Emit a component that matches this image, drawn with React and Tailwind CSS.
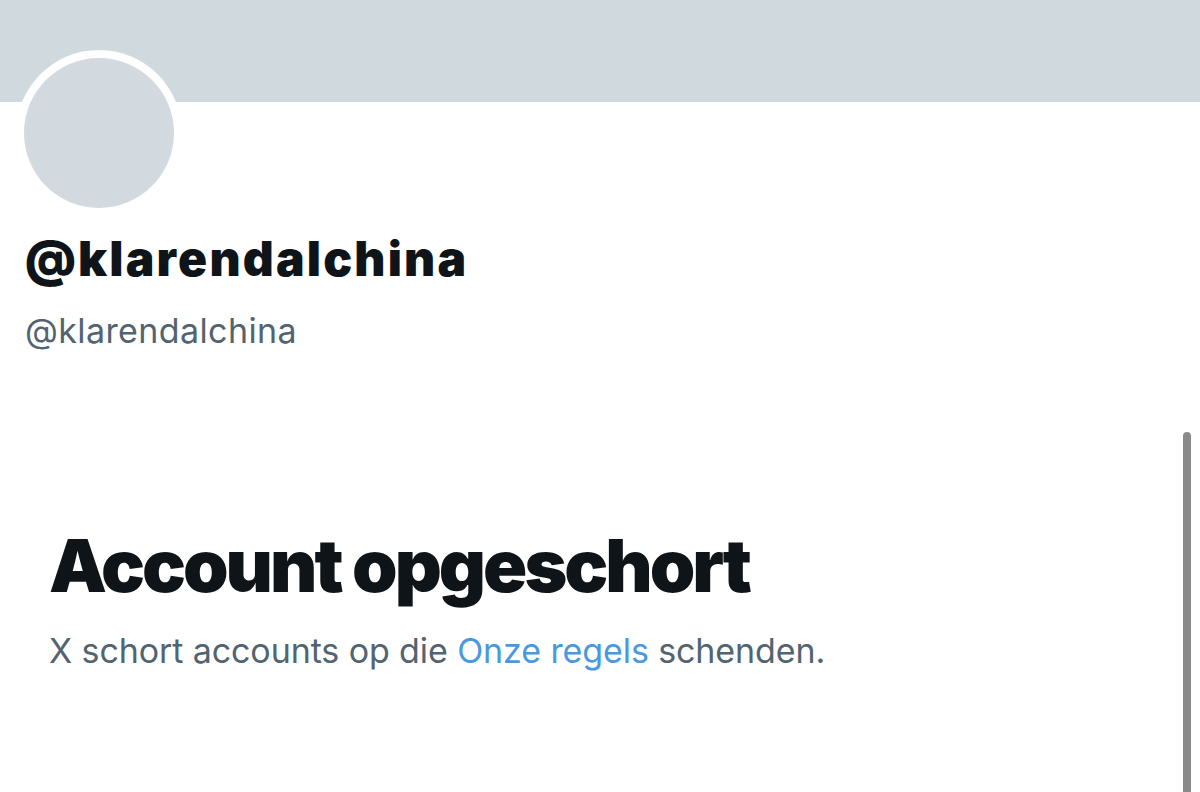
export default function App() {
  return (
    <div className="relative w-[1200px] h-[792px] overflow-hidden bg-white" style={{ fontFamily: "Inter, 'Noto Sans', sans-serif" }}>
      <div className="h-[102px] bg-[#cfd9de]" />
      <div className="pl-[16px]">
        <div className="-mt-[52px] w-[166px] h-[166px] rounded-full bg-white p-[8px]">
          <div className="w-full h-full rounded-full bg-[#d2dae0]" />
        </div>
      </div>
      <div className="pl-[25px] mt-[17px]">
        <div className="text-[48px] leading-[52px] font-black text-[#0f1419] tracking-[2.2px]">@klarendalchina</div>
        <div className="mt-[26px] text-[34px] leading-[40px] text-[#536471] tracking-[0.4px]">@klarendalchina</div>
      </div>
      <div className="pl-[49px] mt-[175px]">
        <div className="text-[73px] leading-[80px] font-black text-[#0f1419] tracking-[-3px]">Account opgeschort</div>
        <div className="mt-[25px] text-[34px] leading-[40px] text-[#536471] tracking-[-0.1px]">
          X schort accounts op die <span className="text-[#4a99e0]">Onze regels</span> schenden.
        </div>
      </div>
      <div className="absolute left-[1183px] top-[432px] w-[8px] h-[380px] rounded-full bg-[#8a8a8a]" />
    </div>
  );
}
